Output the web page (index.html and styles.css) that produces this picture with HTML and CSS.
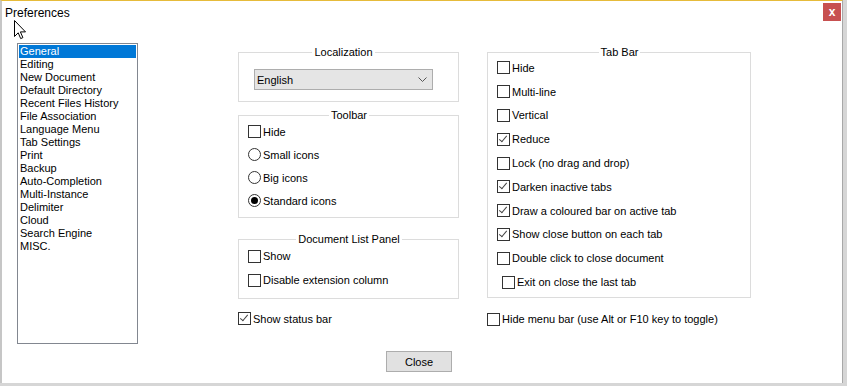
FILE: index.html
```html
<!DOCTYPE html>
<html lang="en">
<head>
    <meta charset="UTF-8">
    <title>Preferences</title>
    <link rel="stylesheet" href="styles.css">
</head>
<body>
    <div class="window">
        <div class="titlebar">
            <span class="title">Preferences</span>
            <span class="closex">x</span>
        </div>

        <!-- mouse pointer sitting over the dialog -->
        <svg class="cursor" width="13" height="20" viewBox="0 0 13 20">
            <path d="M0.5 0.5 L0.5 16.5 L4.2 12.8 L6.7 18.6 L8.9 17.6 L6.4 11.9 L11.5 11.9 Z" fill="#fff" stroke="#000" stroke-width="1"/>
        </svg>

        <div class="content">
            <div class="pages">
                <div class="page selected">General</div>
                <div class="page">Editing</div>
                <div class="page">New Document</div>
                <div class="page">Default Directory</div>
                <div class="page">Recent Files History</div>
                <div class="page">File Association</div>
                <div class="page">Language Menu</div>
                <div class="page">Tab Settings</div>
                <div class="page">Print</div>
                <div class="page">Backup</div>
                <div class="page">Auto-Completion</div>
                <div class="page">Multi-Instance</div>
                <div class="page">Delimiter</div>
                <div class="page">Cloud</div>
                <div class="page">Search Engine</div>
                <div class="page">MISC.</div>
            </div>

            <div class="col middle">
                <fieldset class="group local">
                    <legend>Localization</legend>
                    <div class="combo">
                        <span>English</span>
                        <svg width="9" height="5" viewBox="0 0 9 5"><path d="M0.5 0.5 L4.5 4.5 L8.5 0.5" fill="none" stroke="#555" stroke-width="1"/></svg>
                    </div>
                </fieldset>

                <fieldset class="group toolbar">
                    <legend>Toolbar</legend>
                    <div class="rows">
                        <div class="row r23"><span class="box"></span>Hide</div>
                        <div class="row r23"><span class="radio"></span>Small icons</div>
                        <div class="row r23"><span class="radio"></span>Big icons</div>
                        <div class="row r23"><span class="radio on"></span>Standard icons</div>
                    </div>
                </fieldset>

                <fieldset class="group doclist">
                    <legend>Document List Panel</legend>
                    <div class="rows">
                        <div class="row r24"><span class="box"></span>Show</div>
                        <div class="row r24"><span class="box"></span>Disable extension column</div>
                    </div>
                </fieldset>

                <div class="row r23 loose statusbar"><span class="box checked"></span>Show status bar</div>

                <button class="btn">Close</button>
            </div>

            <div class="col right">
                <fieldset class="group tabbar">
                    <legend>Tab Bar</legend>
                    <div class="rows">
                        <div class="row rt"><span class="box"></span>Hide</div>
                        <div class="row rt"><span class="box"></span>Multi-line</div>
                        <div class="row rt"><span class="box"></span>Vertical</div>
                        <div class="row rt"><span class="box checked"></span>Reduce</div>
                        <div class="row rt"><span class="box"></span>Lock (no drag and drop)</div>
                        <div class="row rt"><span class="box checked"></span>Darken inactive tabs</div>
                        <div class="row rt"><span class="box checked"></span>Draw a coloured bar on active tab</div>
                        <div class="row rt"><span class="box checked"></span>Show close button on each tab</div>
                        <div class="row rt"><span class="box"></span>Double click to close document</div>
                        <div class="row rt indent"><span class="box"></span>Exit on close the last tab</div>
                    </div>
                </fieldset>

                <div class="row r23 loose menubar"><span class="box"></span>Hide menu bar (use Alt or F10 key to toggle)</div>
            </div>
        </div>
    </div>
</body>
</html>
```

FILE: styles.css
```css
body{
    margin:0;
    background-color:#d6d6d6;
    font-family:"Liberation Sans", Arial, sans-serif;
    font-size:11px;
    color:#000;
}

.window{
    position:relative;
    box-sizing:border-box;
    width:843px;
    height:383px;
    background-color:#fff;
    border-top:1px solid #e6bb3a;
    border-left:2px solid #c6c6c6;
    border-right:1px solid #a8a8a8;
}

.titlebar{
    display:flex;
    justify-content:space-between;
    align-items:flex-start;
    height:22px;
    padding-left:3px;
}
.title{
    margin-top:4px;
    line-height:16px;
    font-size:12px;
}
.closex{
    display:flex;
    align-items:center;
    justify-content:center;
    width:18px;
    height:18px;
    margin-top:2px;
    margin-right:1px;
    background-color:#c75050;
    color:#fff;
    font-weight:bold;
    font-size:12px;
    line-height:1;
}

.cursor{
    position:absolute;
    left:12px;
    top:19px;
}

.content{
    display:flex;
    align-items:flex-start;
    padding-left:15px;
    padding-top:20px;
}

/* page list on the left */
.pages{
    box-sizing:border-box;
    width:121px;
    height:301px;
    border:1px solid #828790;
    padding:1px;
}
.page{
    height:13px;
    line-height:13px;
    padding-left:1px;
    white-space:nowrap;
}
.page.selected{
    background-color:#0078d7;
    color:#fff;
}

.col{
    display:flex;
    flex-direction:column;
}
.middle{
    width:221px;
    margin-left:100px;
    padding-top:2px;
}
.right{
    width:264px;
    margin-left:28px;
    padding-top:2px;
}

/* group boxes */
.group{
    margin:0;
    padding:0 8px 0 9px;
    border:1px solid #dcdcdc;
    min-width:0;
}
.group legend{
    margin:0 auto;
    padding:0 2px;
    line-height:14px;
}
.rows{
    margin-top:-2px;
}

.local{
    padding:0 25px 11px 15px;
}
.combo{
    display:flex;
    justify-content:space-between;
    align-items:center;
    box-sizing:border-box;
    height:21px;
    margin-top:10px;
    padding:0 5px 0 2px;
    background-color:#e5e5e5;
    border:1px solid #adadad;
}

.toolbar{
    margin-top:6px;
    padding-bottom:5px;
}
.doclist{
    margin-top:14px;
    padding-bottom:6px;
}
.tabbar{
    padding-bottom:3px;
}
.tabbar .rows{
    margin-top:-3px;
}

/* check boxes and radio buttons */
.row{
    display:flex;
    align-items:center;
    white-space:nowrap;
}
.r23{ height:23px; }
.r24{ height:24px; }
.rt{ height:23.8px; }
.indent{ padding-left:5px; }

.box, .radio{
    box-sizing:border-box;
    position:relative;
    width:13px;
    height:13px;
    margin-right:2px;
    border:1px solid #333;
    background-color:#fff;
    flex-shrink:0;
}
.radio{
    border-radius:50%;
}
.radio.on::after{
    content:"";
    position:absolute;
    left:2px;
    top:2px;
    width:7px;
    height:7px;
    border-radius:50%;
    background-color:#000;
}
.box.checked::after{
    content:"";
    position:absolute;
    left:3px;
    top:0;
    width:3px;
    height:7px;
    border-right:1px solid #444;
    border-bottom:1px solid #444;
    transform:rotate(40deg);
}

.statusbar{
    margin-top:8px;
}
.menubar{
    margin-top:10px;
}

.btn{
    align-self:flex-end;
    width:66px;
    height:21px;
    margin-top:21px;
    margin-right:7px;
    padding:0;
    font-family:inherit;
    font-size:11px;
    background-color:#e1e1e1;
    border:1px solid #adadad;
    border-radius:0;
}
```
